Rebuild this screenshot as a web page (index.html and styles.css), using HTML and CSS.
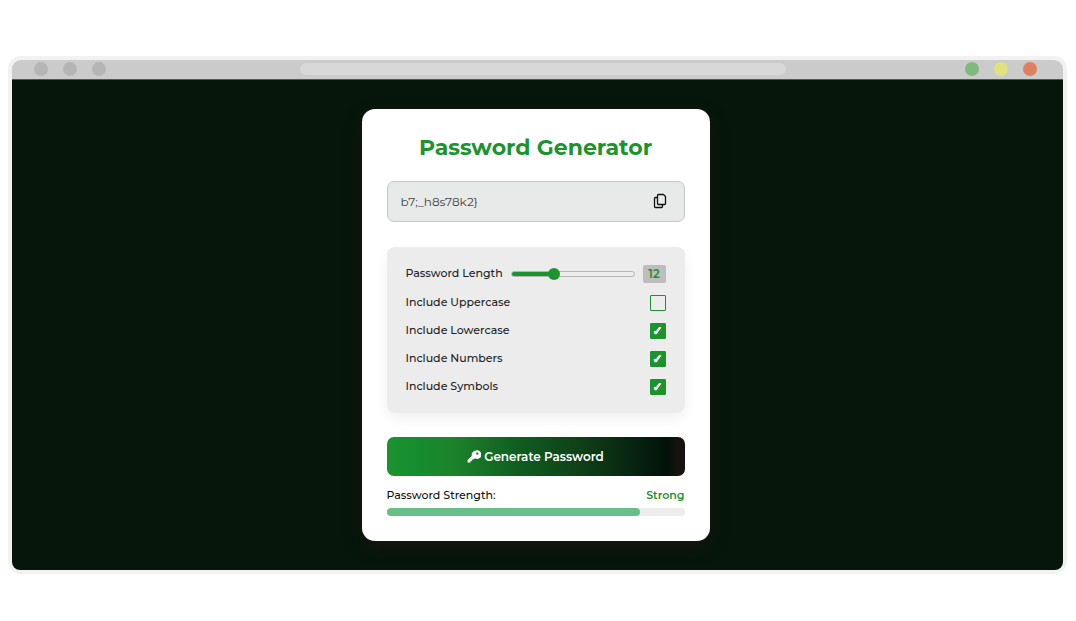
FILE: index.html
```html
<!DOCTYPE html>
<html lang="en">
<head>
    <meta charset="UTF-8">
    <meta name="viewport" content="width=device-width, initial-scale=1.0">
    <title>Password Generator</title>
    <link rel="stylesheet" href="styles.css">
</head>
<body>
    <div class="window">
        <div class="title-bar">
            <div class="dots">
                <span class="dot"></span>
                <span class="dot"></span>
                <span class="dot"></span>
            </div>
            <div class="address"></div>
            <div class="dots">
                <span class="dot green"></span>
                <span class="dot yellow"></span>
                <span class="dot red"></span>
            </div>
        </div>

        <main class="screen">
            <div class="container">
                <h1>Password Generator</h1>

                <div class="password-box">
                    <input type="text" id="password" class="password" value="b7;_h8s78k2}" aria-label="Generated password" readonly>
                    <button type="button" class="copy-btn" aria-label="Copy password">
                        <svg viewBox="0 0 14 16" width="14" height="16" fill="none" stroke="#111" stroke-width="1.3" stroke-linejoin="round">
                            <path d="M5.500 1.500h5L12.500 3.500v7a1 1 0 0 1-1 1h-6a1 1 0 0 1-1-1v-8a1 1 0 0 1 1-1z"/>
                            <path d="M4.500 4.500H2.500a1 1 0 0 0-1 1v8a1 1 0 0 0 1 1h6a1 1 0 0 0 1-1v-2"/>
                        </svg>
                    </button>
                </div>

                <div class="options">
                    <div class="option">
                        <label for="length">Password Length</label>
                        <input type="range" id="length" class="slider" min="4" max="28" value="12">
                        <output for="length" class="length-value">12</output>
                    </div>
                    <div class="option">
                        <label for="uppercase">Include Uppercase</label>
                        <input type="checkbox" id="uppercase">
                    </div>
                    <div class="option">
                        <label for="lowercase">Include Lowercase</label>
                        <input type="checkbox" id="lowercase" checked>
                    </div>
                    <div class="option">
                        <label for="numbers">Include Numbers</label>
                        <input type="checkbox" id="numbers" checked>
                    </div>
                    <div class="option">
                        <label for="symbols">Include Symbols</label>
                        <input type="checkbox" id="symbols" checked>
                    </div>
                </div>

                <button type="button" class="generate-btn">
                    <svg viewBox="0 0 14 13" width="14" height="13" fill="#fff">
                        <path fill-rule="evenodd" d="M9 0.500a4.300 4.300 0 0 0-4.200 5.400L0.600 10v2.500h3v-1.500h1.500V9.500h1.500l1.200-1.200A4.300 4.300 0 1 0 9 0.500zM10.300 2.400a1.200 1.200 0 1 1 0 2.400a1.200 1.200 0 0 1 0-2.400z"/>
                    </svg>
                    Generate Password
                </button>

                <div class="strength">
                    <span>Password Strength:</span>
                    <span class="strength-value">Strong</span>
                </div>
                <div class="strength-bar">
                    <div class="strength-fill" style="width: 85%"></div>
                </div>
            </div>
        </main>
    </div>
</body>
</html>
```
FILE: styles.css
```css
:root {
    --green: #1d932f;
    --dark: #06160b;
}

* {
    box-sizing: border-box;
}

body {
    min-height: 100vh;
    margin: 0;
    padding: 16px 9px 8px 8px;
    display: flex;
    align-items: center;
    font-family: Montserrat, Inter, sans-serif;
    font-size: 11px;
    font-weight: 500;
    background: #fff;
}

input, button {
    margin: 0;
    font: inherit;
}

.window {
    flex: 1;
    border: 4px solid #f2f2f2;
    border-radius: 13px;
    background: #f2f2f2;
}

.title-bar {
    display: flex;
    align-items: center;
    justify-content: space-between;
    height: 20px;
    padding: 0 26px 1px 22px;
    border-bottom: 1px solid #4f5b45;
    border-radius: 9px 9px 0 0;
    background: #cbcbcb;
}

.dots {
    display: flex;
    gap: 15px;
}

.dot {
    width: 14px;
    height: 14px;
    border-radius: 50%;
    background: #b5b5b5;
}

.dot.green { background: #80b97d; }
.dot.yellow { background: #e2e180; }
.dot.red { background: #df7f62; }

.address {
    flex: 0 1 486px;
    height: 12px;
    margin-left: 14px;
    border-radius: 6px;
    background: #d8d8d8;
}

.screen {
    padding: 29px 4px 29px 0;
    border-radius: 0 0 8px 8px;
    background: var(--dark);
}

.container {
    max-width: 348px;
    margin: 0 auto;
    padding: 25px;
    border-radius: 13px;
    background: #fff;
    box-shadow: 0 6px 16px #15150f;
}

h1 {
    margin: 0 0 20px;
    font-size: 22px;
    font-weight: 700;
    line-height: 27px;
    text-align: center;
    color: var(--green);
}

.password-box {
    display: flex;
    align-items: center;
    height: 41px;
    padding: 0 17px 0 13px;
    border: 1px solid #c3c9c5;
    border-radius: 7px;
    background: #e8eae9;
}

.password {
    flex: 1;
    min-width: 0;
    padding: 0;
    border: none;
    background: none;
    color: #444;
    font-size: 12px;
    font-weight: 400;
    outline: none;
}

.copy-btn {
    display: flex;
    padding: 0;
    border: none;
    background: none;
    cursor: pointer;
}

.options {
    display: flex;
    flex-direction: column;
    gap: 12px;
    margin: 25px 0 24px;
    padding: 18px 19px;
    border-radius: 8px;
    background: #ececec;
    box-shadow: 0 6px 14px rgba(0, 0, 0, 0.06);
    color: #222;
}

.option {
    display: flex;
    align-items: center;
    justify-content: space-between;
    gap: 8px;
    line-height: 16px;
}

.option label {
    padding-bottom: 2px;
    line-height: 14px;
}

.slider {
    flex: 1;
    min-width: 0;
    height: 6px;
    appearance: none;
    border: 1px solid #b5b5b5;
    border-radius: 3px;
    background: linear-gradient(to right, var(--green) 34%, #ececec 34%) border-box;
    cursor: pointer;
}

.slider::-webkit-slider-thumb {
    appearance: none;
    width: 12px;
    height: 12px;
    border-radius: 50%;
    background: var(--green);
}

.length-value {
    width: 23px;
    border-radius: 2px;
    background: #bdbdbd;
    color: var(--green);
    font-size: 12px;
    font-weight: 600;
    line-height: 18px;
    text-align: center;
}

input[type="checkbox"] {
    display: grid;
    place-items: center;
    width: 16px;
    height: 16px;
    appearance: none;
    border: 1px solid var(--green);
    border-radius: 1px;
    cursor: pointer;
}

input[type="checkbox"]:checked {
    background: var(--green);
}

input[type="checkbox"]:checked::before {
    content: "✓";
    color: #fff;
    font-family: "DejaVu Sans", sans-serif;
    font-size: 12px;
    font-weight: 700;
    line-height: 14px;
    -webkit-text-stroke: 1px #fff;
}

.generate-btn {
    display: flex;
    align-items: center;
    justify-content: center;
    gap: 3px;
    width: 100%;
    height: 39px;
    border: none;
    border-radius: 7px;
    background: linear-gradient(to right, #1d932f, #148f30 8%, #1d832b 22%, #0f5c20 45%, #0f4018 65%, #02120a 94%, #15120f 97%);
    color: #fff;
    font-size: 12px;
    font-weight: 600;
    cursor: pointer;
}

.strength {
    display: flex;
    justify-content: space-between;
    margin: 11px 0 5px;
    line-height: 16px;
    color: #111;
}

.strength-value {
    color: var(--green);
    font-weight: 600;
}

.strength-bar {
    height: 8px;
    border-radius: 4px;
    background: #ededed;
}

.strength-fill {
    height: 100%;
    border-radius: 4px;
    background: #68c088;
}
```
